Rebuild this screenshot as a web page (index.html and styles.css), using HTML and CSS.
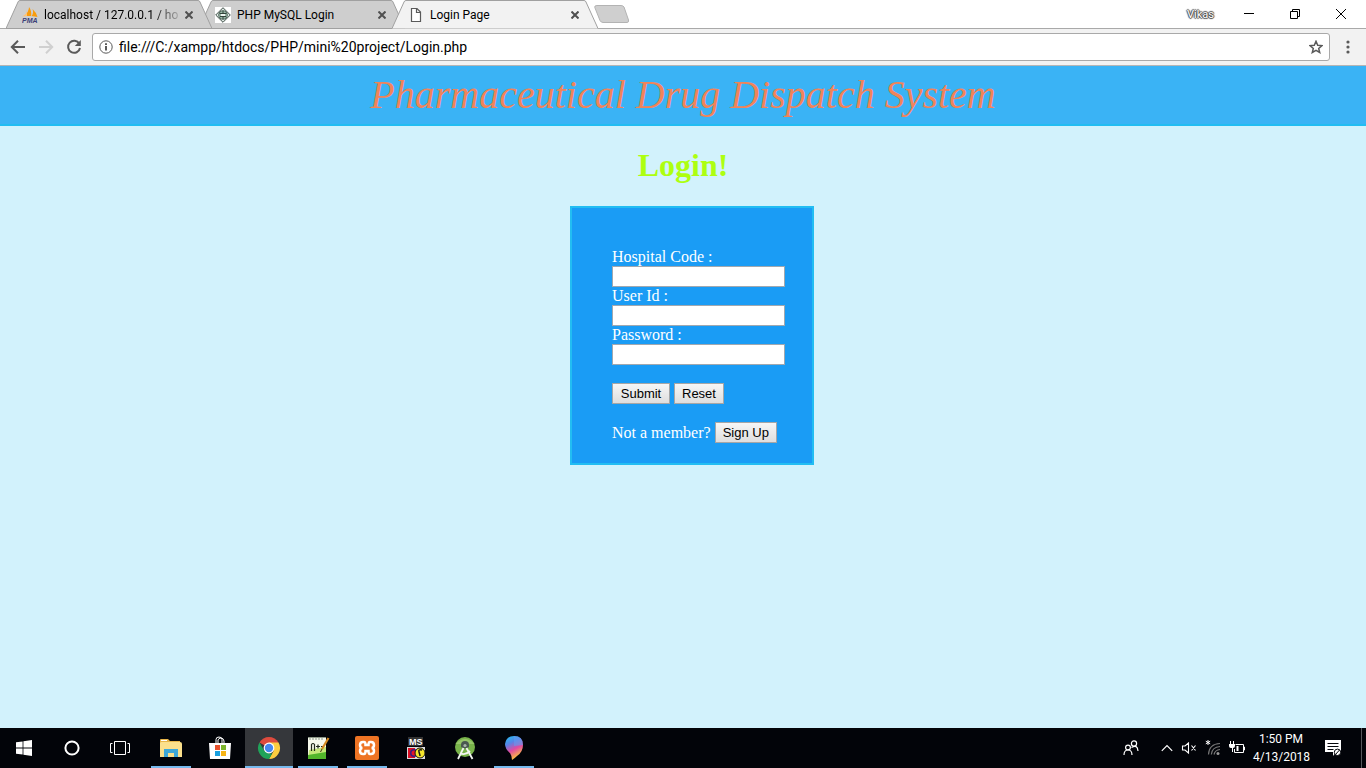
FILE: index.html
```html
<!DOCTYPE html>
<html lang="en">
<head>
<meta charset="utf-8">
<title>Login Page</title>
<link rel="stylesheet" href="styles.css">
</head>
<body>
<header class="browser">
  <div class="tabstrip">
    <div class="tab tab-first">
      <svg class="tab-shape" viewBox="0 0 206 29" preserveAspectRatio="none"><path d="M0 28.5 12 2Q12.500.5 14 .5H192Q193.500.5 194 2L206 28.5Z"/></svg>
      <svg class="favicon" viewBox="0 0 16 16"><path fill="#f89c0e" d="M7 0Q10 4 9 9L2 9Q7 5 7 0ZM10.500 2Q14 5 15.500 10L9.500 9Q12 6 10.500 2Z"/><path fill="#ffc477" d="M5 3Q5 7 0 9.500L5 9Z"/><text x="0" y="16" class="pma">PMA</text></svg>
      <span class="tab-title fade">localhost / 127.0.0.1 / ho</span>
      <button class="close" aria-label="Close tab"><svg viewBox="0 0 8 8"><path d="M.5.5l7 7M7.500.5l-7 7"/></svg></button>
    </div>
    <div class="tab tab-second">
      <svg class="tab-shape" viewBox="0 0 206 29" preserveAspectRatio="none"><path d="M0 28.5 12 2Q12.500.5 14 .5H192Q193.500.5 194 2L206 28.5Z"/></svg>
      <svg class="favicon" viewBox="0 0 16 16"><path fill="#fff" d="M0 0h16v16H0z"/><path fill="#dfe9e4" stroke="#3e4d46" d="M8 .7 15.300 8 8 15.300.7 8Z"/><circle cx="8" cy="8" r="4.300" fill="#9ab8a8" stroke="#52675c"/><path stroke="#32443a" d="M4.500 6.500h7M5 9.500h6M8 4v8" fill="none"/><path d="M6 7h4v2H6z" fill="#eef5f0"/></svg>
      <span class="tab-title">PHP MySQL Login</span>
      <button class="close" aria-label="Close tab"><svg viewBox="0 0 8 8"><path d="M.5.5l7 7M7.500.5l-7 7"/></svg></button>
    </div>
    <div class="tab tab-active">
      <svg class="tab-shape" viewBox="0 0 206 29" preserveAspectRatio="none"><path d="M0 28.5 12 2Q12.500.5 14 .5H192Q193.500.5 194 2L206 28.5"/></svg>
      <svg class="favicon" viewBox="0 0 16 16"><path d="M3.500 1.500H9L12.500 5v9.500h-9ZM8.500 1.500V5.500h4" fill="#fff" stroke="#5a5a5a" stroke-width="1.200"/></svg>
      <span class="tab-title">Login Page</span>
      <button class="close" aria-label="Close tab"><svg viewBox="0 0 8 8"><path d="M.5.5l7 7M7.500.5l-7 7"/></svg></button>
    </div>
    <button class="newtab" aria-label="New tab"><svg viewBox="0 0 36 18"><path d="M3 .5H27Q29 .5 30 2L34.500 15Q35 17.500 33 17.500H9Q7 17.500 6 15.500L.8 2.500Q.2.500 3 .5Z" fill="#cfcfcf" stroke="#b3b3b3"/></svg></button>
    <div class="window-tools">
      <span class="profile">Vikas</span>
      <button aria-label="Minimize"><svg viewBox="0 0 12 12"><path d="M1 5.500h10"/></svg></button>
      <button aria-label="Restore"><svg viewBox="0 0 12 12"><path d="M1.500 3.500h7v7h-7zM3.500 3.500v-2h7v7h-2"/></svg></button>
      <button aria-label="Close"><svg viewBox="0 0 12 12"><path d="M1 1l10 10M11 1 1 11"/></svg></button>
    </div>
  </div>
  <div class="toolbar">
    <button class="nav" aria-label="Back"><svg viewBox="0 0 16 16"><path d="M15 8H2.500M8 1.800 1.800 8 8 14.200"/></svg></button>
    <button class="nav nav-off" aria-label="Forward" disabled><svg viewBox="0 0 16 16"><path d="M1 8h12.500M8 1.800 14.200 8 8 14.200"/></svg></button>
    <button class="nav" aria-label="Reload"><svg viewBox="0 0 16 16"><path d="M13.300 4.800A6 6 0 1 0 14 9"/><path d="M14.800 1v6h-6z" fill="#5a5a5a" stroke="none"/></svg></button>
    <div class="omnibox">
      <svg class="info" viewBox="0 0 14 14"><circle cx="7" cy="7" r="6.200"/><path d="M7 6v4.500M7 3.300v1.600"/></svg>
      <input class="url" type="text" aria-label="Address" value="file:///C:/xampp/htdocs/PHP/mini%20project/Login.php">
      <svg class="star" viewBox="0 0 14 14"><path d="M7 1.300 8.700 5.200 12.900 5.600 9.700 8.400 10.700 12.500 7 10.300 3.300 12.500 4.300 8.400 1.100 5.600 5.300 5.200Z"/></svg>
    </div>
    <button class="menu" aria-label="Menu"><svg viewBox="0 0 4 14"><circle cx="2" cy="2" r="1.600"/><circle cx="2" cy="7" r="1.600"/><circle cx="2" cy="12" r="1.600"/></svg></button>
  </div>
</header>
<main class="page">
  <div class="banner">Pharmaceutical Drug Dispatch System</div>
  <h1 class="heading">Login!</h1>
  <div class="form-area">
    <form class="login">
      <label for="code">Hospital Code :</label>
      <input id="code" type="text">
      <label for="user">User Id :</label>
      <input id="user" type="text">
      <label for="pass">Password :</label>
      <input id="pass" type="password">
      <div class="row"><button type="submit">Submit</button><button type="reset">Reset</button></div>
      <div class="row"><span>Not a member?</span><button type="button">Sign Up</button></div>
    </form>
  </div>
</main>
<footer class="taskbar">
  <button class="task" aria-label="Start"><svg class="i16" viewBox="0 0 16 16"><path fill="#fff" d="M0 2.300 6.600 1.400V7.600H0ZM7.400 1.200 16 0v7.600H7.400ZM0 8.400h6.600v6.200L0 13.700ZM7.400 8.400H16V16L7.400 14.800Z"/></svg></button>
  <button class="task" aria-label="Cortana"><svg class="i16" viewBox="0 0 16 16"><circle cx="8" cy="8" r="6.600" fill="none" stroke="#fff" stroke-width="2"/></svg></button>
  <button class="task" aria-label="Task view"><svg class="i20" viewBox="0 0 20 20"><path d="M4.500 3.500h11v13h-11zM2.500 5.500h-2v9h2M17.500 5.500h2v9h-2" fill="none" stroke="#fff"/></svg></button>
  <div class="apps">
    <button class="task open" aria-label="File Explorer"><svg class="i24" viewBox="0 0 24 24"><path fill="#e8b64a" d="M1 4Q1 3 2 3H9L11 5H21V20H1Z"/><path fill="#fbe08c" d="M2 6H21Q23 6 23 8V21H1V7Z"/><path fill="#3ea8d8" d="M5 13h14v8h-4v-4H9v4H5Z"/><path fill="#fff" d="M2 4h6v1H2z"/></svg></button>
    <button class="task" aria-label="Store"><svg class="i24" viewBox="0 0 24 24"><path d="M8 7V3.500Q8 1 11 1T14 3.500V7M10 7V4Q10.500 2 13 2T16 5V7" fill="none" stroke="#fff"/><path fill="#fff" d="M1 7h22l-1 16H2Z"/><path fill="#e8502c" d="M7 9h5v5H7z"/><path fill="#7db52c" d="M13 9h5v5h-5z"/><path fill="#18a0e0" d="M7 15h5v5H7z"/><path fill="#f8b414" d="M13 15h5v5h-5z"/></svg></button>
    <button class="task open current" aria-label="Chrome"><svg class="i24" viewBox="0 0 24 24"><path fill="#dd4b3e" d="M12 12 2.470 6.500A11 11 0 0 1 21.500 6.500Z"/><path fill="#fccd40" d="M12 6.500H21.530A11 11 0 0 1 12 23L16.760 14.750Z"/><path fill="#20a35a" d="M2.470 6.500 7.240 14.750 12 17.500H15.180L12 23A11 11 0 0 1 2.470 6.500Z"/><circle cx="12" cy="12" r="5.400" fill="#fff"/><circle cx="12" cy="12" r="4.200" fill="#4688f1"/></svg></button>
    <button class="task open" aria-label="Notepad++"><svg class="i24" viewBox="0 0 24 24"><path fill="#f5f8ed" d="M2 1h18v22H2z"/><path d="M2 1.500h18M4 1v3M7 1v3M10 1v3M13 1v3M16 1v3" stroke="#8d9889" fill="none"/><path fill="#c5e87a" d="M3 14 20 11V23H2Z"/><path fill="#52b62b" d="M2 19 20 16V23H2Z"/><path d="M5.500 15V8.500Q7 6.500 8.500 8.500V15M10 10.500h4M12 8.500v4M15 10.500h3" fill="none" stroke="#20291b" stroke-width="1.200"/><path d="M22.500 2 16 13" stroke="#d58a22" stroke-width="2.200"/><path d="M16 13 14.500 16" stroke="#453215"/></svg></button>
    <button class="task open" aria-label="XAMPP"><svg class="i24" viewBox="0 0 24 24"><rect width="24" height="24" rx="2" fill="#ee7424"/><path d="M9 6H8Q5 6 5 9T7.500 12Q5 12 5 15T8 18H9Q10.500 18 10.500 15H13.500Q13.500 18 15 18H16Q19 18 19 15T16.500 12Q19 12 19 9T16 6H15Q13.500 6 13.500 9H10.500Q10.500 6 9 6Z" fill="none" stroke="#fff" stroke-width="2.500"/></svg></button>
    <button class="task" aria-label="MS-DOS"><svg class="i24" viewBox="0 0 24 24"><rect x="4" y="1" width="15" height="9" fill="#333"/><text x="5" y="9" class="ms">MS</text><path fill="#ddd" d="M3 11h18v12H3z"/><path fill="#d90d23" d="M4 12h7v10H4z"/><circle cx="10" cy="17" r="4" fill="#3a1c80"/><circle cx="10" cy="17" r="2.500" fill="#e8122a"/><circle cx="16" cy="17" r="5" fill="#f5e52c" stroke="#111"/><path d="M18 14q-4-1-3 2t1 4" fill="none" stroke="#171717" stroke-width="1.500"/></svg></button>
    <button class="task" aria-label="Android Studio"><svg class="i24" viewBox="0 0 24 24"><circle cx="12" cy="11" r="10" fill="#78b34a"/><path d="M2.500 8Q12-2 21.500 8Z" fill="#97c66a"/><path d="M8 11V9Q8 5 12 5T16 9v2q-4 3-8 0Z" fill="#4a5850"/><path d="M10.500 12 5 23M13.500 12l6 11M7 17q5 3 10-2" fill="none" stroke="#f3f6f2" stroke-width="1.800"/><circle cx="12" cy="9.500" r="1.600" fill="#a8b6aa"/></svg></button>
    <button class="task open" aria-label="Paint 3D"><svg class="i24" viewBox="0 0 24 24"><defs><linearGradient id="drop" x1="0" y1="0" x2=".4" y2="1"><stop offset="0" stop-color="#20c7f2"/><stop offset=".35" stop-color="#5585e8"/><stop offset=".65" stop-color="#e14aa2"/><stop offset="1" stop-color="#ffc23d"/></linearGradient></defs><path d="M12 0Q21 0 21 9Q21 16 15 20Q13 22 10 24Q10 20 8 17Q3 13 3 8Q4 0 12 0Z" fill="url(#drop)"/><path d="M12 0Q21 0 21 9L12 10Z" fill="#5f9df0" opacity=".6"/></svg></button>
  </div>
  <div class="tray">
    <svg class="i16" viewBox="0 0 16 16"><g fill="none" stroke="#fff" stroke-width="1.200"><circle cx="5" cy="7.500" r="2.400"/><path d="M1 15Q1 10 5 10T9 15"/><circle cx="11" cy="3.500" r="2.600"/><path d="M8.500 7.500Q14.500 4 15 11"/></g></svg>
    <svg class="i12" viewBox="0 0 12 12"><path d="M.8 8.800 6 3.500l5.200 5.300" fill="none" stroke="#fff" stroke-width="1.200"/></svg>
    <svg class="i16" viewBox="0 0 16 16"><path d="M1.500 6v4h2.500L7.500 13V3L4 6ZM10.500 5.500l4 5M14.500 5.500l-4 5" fill="none" stroke="#fff" stroke-width="1.100"/></svg>
    <svg class="i16" viewBox="0 0 16 16"><path d="M3 0v5M.8 1.200l4.400 2.600M5.200 1.200.8 3.800" stroke="#fff"/><g fill="none" stroke="#777" stroke-width="1.200"><path d="M3.500 14.500Q4 4 15 3.500M6.300 14.500Q7 7 15 6.500M9 14.500Q10 10 15 9.500"/></g><circle cx="13" cy="13.500" r="1.500" fill="#999"/></svg>
    <svg class="i16" viewBox="0 0 16 16"><path d="M6.500 4.500h8v8h-9V9M14.500 7h1v3h-1" fill="none" stroke="#fff"/><path d="M7.500 6h2v5h-2zM0 4h6v2Q6 8 4 8v4H3V8H2Q0 8 0 6ZM1 1h1v3H1zM4 1h1v3H4z" fill="#fff"/></svg>
    <div class="clock"><span>1:50 PM</span><span>4/13/2018</span></div>
    <svg class="notice" viewBox="0 0 16 16"><path d="M0 0h16v12h-5l-3 4v-4H0Z" fill="#fff"/><path d="M2.500 3.500h11M2.500 6.500h11M2.500 9.500h6" stroke="#05070c"/><circle cx="12.500" cy="12.300" r="3.200" fill="#fff" stroke="#05070c"/><path d="M10.500 14.500 14.500 10" stroke="#05070c"/></svg>
    <span class="peek"></span>
  </div>
</footer>
</body>
</html>
```

FILE: styles.css
```css
* { box-sizing: border-box; }
body {
  margin: 0;
  min-height: 100vh;
  display: flex;
  flex-direction: column;
  font-family: "Liberation Serif", "Times New Roman", serif;
  font-size: 16px;
}
svg { display: block; flex: none; }
button { font: inherit; }

.browser { font-family: Roboto, "Open Sans", sans-serif; color: #000; }
.browser button { padding: 0; border: 0; background: none; display: grid; place-items: center; }
.tabstrip {
  display: flex;
  height: 29px;
  padding-left: 6px;
  background: #fff;
  border-bottom: 1px solid #a9a9a9;
}
.tab {
  position: relative;
  display: flex;
  align-items: center;
  width: 206px;
  height: 29px;
  padding: 0 15px 0 16px;
  font-size: 12px;
}
.tab + .tab { margin-left: -13px; }
.tab-first { z-index: 1; }
.tab-active { z-index: 2; }
.tab-shape { position: absolute; inset: 0; width: 100%; height: 100%; fill: #cecece; stroke: #a0a0a0; }
.tab-active .tab-shape { fill: #f2f2f2; }
.favicon, .tab-title, .close { position: relative; }
.favicon { width: 16px; height: 16px; }
.pma { font: italic bold 7px "Liberation Sans", sans-serif; fill: #3c3f78; }
.tab-title { flex: 1; min-width: 0; margin-left: 6px; overflow: hidden; white-space: nowrap; }
.fade { mask-image: linear-gradient(to right, #000 80%, transparent 102%); }
.close { width: 16px; height: 16px; }
.close svg { width: 8px; height: 8px; fill: none; stroke: #505050; stroke-width: 2; }
.newtab { align-self: center; margin-left: -4px; padding-top: 2px; }
.newtab svg { width: 36px; height: 18px; }
.window-tools { display: flex; margin-left: auto; padding-right: 2px; align-items: center; }
.profile {
  margin-right: 12px;
  font-size: 11px;
  color: #fff;
  text-shadow: 1px 0 1px #444, -1px 0 1px #444, 0 1px 1px #444, 0 -1px 1px #444;
}
.browser .window-tools button { width: 46px; height: 28px; }
.window-tools svg { width: 12px; height: 12px; fill: none; stroke: #000; }

.toolbar {
  display: flex;
  align-items: center;
  height: 37px;
  padding: 0 8px 0 4px;
  background: #f2f2f2;
  border-bottom: 1px solid #b5b5b5;
}
.browser .nav { width: 28px; height: 28px; }
.nav svg { width: 16px; height: 16px; fill: none; stroke: #5a5a5a; stroke-width: 2; }
.browser .nav-off svg { stroke: #d0d0d0; }
.omnibox {
  flex: 1;
  display: flex;
  align-items: center;
  height: 28px;
  margin-left: 4px;
  padding: 0 6px;
  border: 1px solid #a9a9a9;
  border-radius: 3px;
  background: #fff;
}
.info { width: 14px; height: 14px; fill: none; stroke: #5a5a5a; stroke-width: 2; }
.info circle { stroke-width: 1; }
.url {
  flex: 1;
  min-width: 0;
  margin-left: 6px;
  padding: 0;
  border: 0;
  outline: 0;
  font: 14px Roboto, "Open Sans", sans-serif;
  color: #000;
}
.star { width: 14px; height: 14px; fill: none; stroke: #5a5a5a; stroke-width: 1.5; }
.browser .menu { width: 20px; height: 28px; margin-left: 8px; }
.menu svg { width: 4px; height: 14px; fill: #5a5a5a; }

.page { flex: 1; background: #d2f2fc; }
.banner {
  height: 60px;
  border-bottom: 2px solid #22bdf2;
  background: #3ab3f5;
  color: #f0845a;
  font-size: 40px;
  font-style: italic;
  line-height: 58px;
  text-align: center;
}
.heading {
  margin: 21px 0 22px;
  font-size: 32px;
  line-height: 37px;
  color: #adff10;
  text-align: center;
}
.form-area { display: flex; justify-content: center; padding-left: 18px; }
.login {
  display: flex;
  flex-direction: column;
  align-items: flex-start;
  width: 244px;
  padding: 40px 20px 20px 40px;
  border: 2px solid #22bdf2;
  background: #1a9cf5;
  color: #fff;
  line-height: 18px;
}
.login input {
  width: 173px;
  height: 21px;
  padding: 1px;
  border: 1px solid #a0a8b0;
  background: #fff;
  font: 13px "Liberation Sans", Arial, sans-serif;
}
.row { display: flex; align-items: center; gap: 4px; margin-top: 18px; white-space: nowrap; }
.login button {
  height: 21px;
  padding: 0 7px;
  border: 1px solid #a6a6a6;
  background: linear-gradient(#f6f6f6, #dedede);
  color: #000;
  font: 13px "Liberation Sans", Arial, sans-serif;
}
.login button[type="submit"] { min-width: 58px; }

.taskbar {
  display: flex;
  height: 40px;
  background: #020409;
  color: #fff;
  font-family: Roboto, "Open Sans", sans-serif;
}
.task {
  display: grid;
  place-items: center;
  width: 48px;
  height: 40px;
  padding: 0;
  border: 0;
  background: none;
}
.apps { display: flex; gap: 1px; margin-left: 3px; }
.open { background: linear-gradient(#76b9ed, #76b9ed) center bottom / 40px 2px no-repeat; }
.current { background-color: #35373b; background-size: 48px 2px; }
.i12 { width: 12px; height: 12px; }
.i16 { width: 16px; height: 16px; }
.i20 { width: 20px; height: 20px; }
.i24 { width: 24px; height: 24px; }
.ms { font: bold 9px "Liberation Sans", sans-serif; fill: #fff; }
.tray { display: flex; align-items: center; gap: 8px; margin-left: auto; }
.tray .i12 { margin-left: 14px; }
.clock {
  display: flex;
  flex-direction: column;
  width: 56px;
  font-size: 12px;
  line-height: 18px;
  text-align: center;
  white-space: nowrap;
}
.notice { width: 16px; height: 16px; margin-left: 8px; }
.peek { width: 5px; height: 40px; margin-left: 12px; border-left: 1px solid #55585c; }
```
